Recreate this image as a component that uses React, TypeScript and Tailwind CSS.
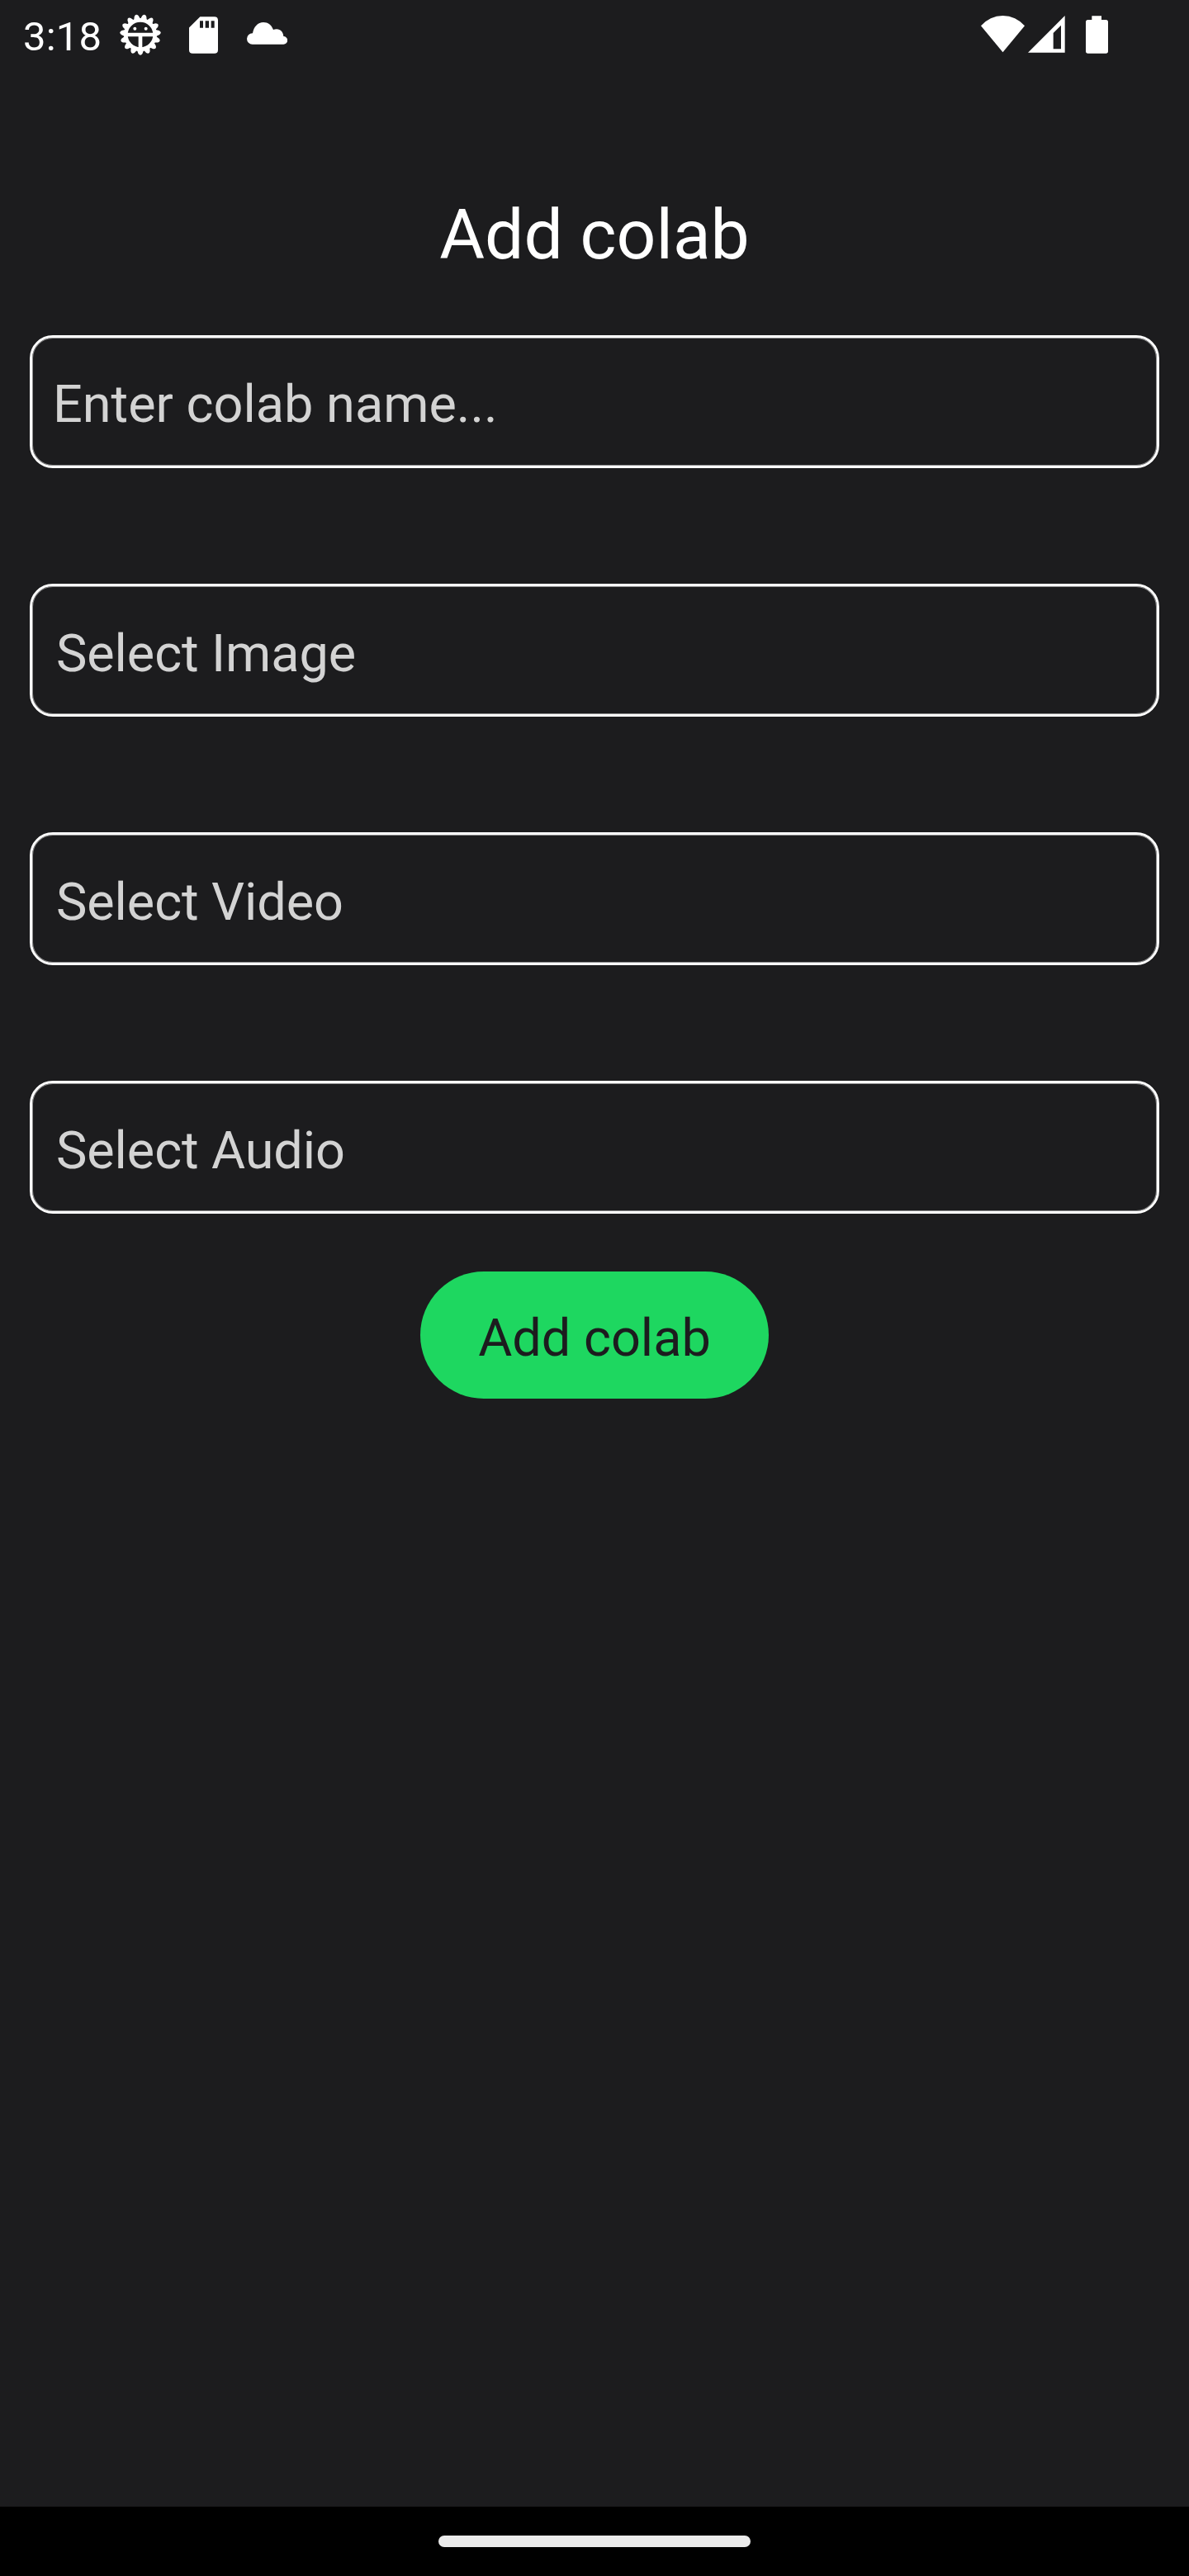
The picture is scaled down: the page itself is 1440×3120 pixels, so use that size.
import React from "react";

const TEETH = Array.from({ length: 15 }, (_, i) => i * 24);

function DebugIcon() {
  return (
    <svg className="h-[50px] w-[50px]" viewBox="-75 -75 150 150" fill="none">
      {TEETH.map((angle) => (
        <path key={angle} transform={`rotate(${angle})`} d="M-14 50L-7.500 69Q0 80 7.500 69L14 50Z" fill="white" />
      ))}
      <circle r="53" stroke="white" strokeWidth="14" />
      <path d="M-50 0H50M0 0V50" stroke="white" strokeWidth="14" />
      <circle cx="-20" cy="-22" r="6" fill="white" />
      <circle cx="20" cy="-22" r="6" fill="white" />
    </svg>
  );
}

function SdCardIcon() {
  return (
    <svg className="h-[45px] w-[35px]" viewBox="0 0 105 134" fill="white">
      <path
        fillRule="evenodd"
        d="M40 0H92Q105 0 105 13V121Q105 134 92 134H13Q0 134 0 121V40ZM39 15V41H51V15ZM59 15V41H72V15ZM80 15V41H92V15Z"
      />
    </svg>
  );
}

function CloudIcon() {
  return (
    <svg className="h-[27px] w-[49px]" viewBox="0 0 147 81" fill="white">
      <path d="M20 80A20 20 0 0 1 20 40H21C25 16 40 0 60 0C77 0 89 9 96 27Q101 25 108 25C123 25 132 36 133 51A14.500 14.500 0 0 1 133 80Z" />
    </svg>
  );
}

function WifiIcon() {
  return (
    <svg className="h-[45px] w-[53px]" viewBox="0 0 159 135" fill="white">
      <path d="M0 37A104 104 0 0 1 159 37L79.500 133Z" />
    </svg>
  );
}

function SignalIcon() {
  return (
    <svg className="h-[45px] w-[45px]" viewBox="0 0 135 135" fill="white">
      <path fillRule="evenodd" d="M0 134H134V0ZM92 63L120 35V121H92Z" />
    </svg>
  );
}

function BatteryIcon() {
  return (
    <svg className="h-[46px] w-[27px]" viewBox="0 0 81 138" fill="white">
      <path d="M22 1H57V15H73Q81 15 81 23V129Q81 137 73 137H8Q0 137 0 129V23Q0 15 8 15H22Z" />
    </svg>
  );
}

function StatusBar() {
  return (
    <header className="flex h-[88px] items-start pr-[98px] pl-7 text-white">
      <span className="mt-4 w-[117px] text-[49px] leading-[57px] tracking-[0.2px]">3:18</span>
      <div className="mt-[17px]">
        <DebugIcon />
      </div>
      <div className="mt-5 ml-[34px]">
        <SdCardIcon />
      </div>
      <div className="mt-[27px] ml-[35px]">
        <CloudIcon />
      </div>
      <div className="mt-[19px] ml-auto flex">
        <WifiIcon />
        <div className="ml-1">
          <SignalIcon />
        </div>
        <div className="ml-[25px]">
          <BatteryIcon />
        </div>
      </div>
    </header>
  );
}

const FIELD =
  "flex h-[161px] w-full items-center rounded-[28px] border-3 border-white bg-transparent text-[63px] leading-[74px] text-[#d3d3d3] shadow-[inset_0_0_0_1px_rgba(255,255,255,0.5)]";

function PickerField({ label }: { label: string }) {
  return (
    <button type="button" className={`${FIELD} px-[29px] pt-2 text-left tracking-[-0.1px]`}>
      {label}
    </button>
  );
}

export default function App() {
  return (
    <div className="flex h-[3120px] w-[1440px] flex-col bg-[#1c1c1e] font-['Roboto',sans-serif]">
      <StatusBar />
      <main className="flex flex-1 flex-col items-center px-9 pt-[147px]">
        <h1 className="text-[84px] leading-[99px] text-white">Add colab</h1>
        <form className="mt-[72px] flex w-full flex-col gap-[140px]">
          <input
            className={`${FIELD} px-[25px] pt-1.5 outline-none placeholder:text-[#d3d3d3] placeholder:opacity-100`}
            placeholder="Enter colab name..."
          />
          <PickerField label="Select Image" />
          <PickerField label="Select Video" />
          <PickerField label="Select Audio" />
        </form>
        <button
          type="button"
          className="mt-[70px] flex h-[154px] w-[422px] items-center justify-center rounded-full bg-[#1ed760] pt-[7px] text-[63px] leading-[74px] text-[#1c1c1e]"
        >
          Add colab
        </button>
      </main>
      <footer className="flex h-[84px] items-center justify-center bg-black">
        <div className="h-3.5 w-[378px] rounded-full bg-[#ebebeb]" />
      </footer>
    </div>
  );
}
